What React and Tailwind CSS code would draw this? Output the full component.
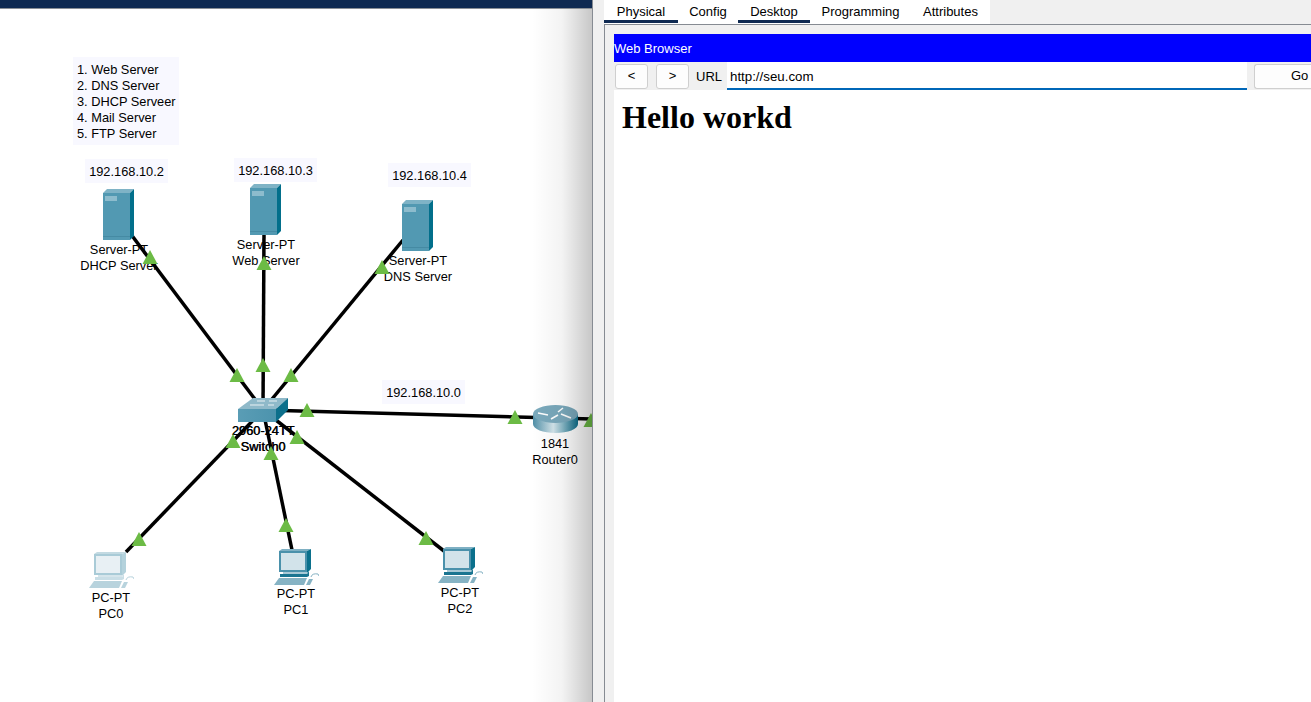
import React from "react";

function Server() {
  return (
    <svg className="block shrink-0 -ml-[2px]" width="31" height="51" viewBox="0 0 31 51">
      <polygon points="0,4 4,0 31,0 27,4" fill="#7fb3c6" />
      <rect x="0" y="4" width="27" height="47" fill="#5299b2" />
      <polygon points="27,4 31,0 31,47 27,51" fill="#026f8b" />
      <rect x="2" y="7" width="12" height="5" fill="#8dbccd" />
      <rect x="0" y="47" width="27" height="1" fill="#458aa3" />
    </svg>
  );
}

function Pc({ faded }) {
  const c = faded
    ? { front: "#a9cbd7", top: "#c3dae2", side: "#b4d2dc", screen: "#e8f0f4", base: "#b8d3dd", dark: "#c9dee6", light: "#d5e5eb" }
    : { front: "#4a91ab", top: "#7fb0c3", side: "#0b708c", screen: "#d2e3ea", base: "#86b3c4", dark: "#1a7591", light: "#a8c9d6" };
  return (
    <svg className="block shrink-0" width="45" height="36" viewBox="0 0 45 36">
      <polygon points="5,2 8,0 37,0 33,2" fill={c.top} />
      <rect x="5" y="2" width="28" height="21" fill={c.front} />
      <polygon points="33,2 37,0 37,20 33,24" fill={c.side} />
      <rect x="7" y="4" width="24" height="17" fill={c.screen} />
      <rect x="9" y="23" width="24" height="2" fill={c.light} />
      <polygon points="6,25 33,25 35,22 35,27 33,28 6,28" fill={c.dark} />
      <polygon points="5,29 33,29 30,36 0,36" fill={c.base} />
      <polygon points="32,36 35,30 39,30 36,36" fill={c.base} />
      <path d="M37 28 q1 -4 7 -3 l1 2" fill="none" stroke={c.base} strokeWidth="1" />
    </svg>
  );
}

function Switch() {
  return (
    <svg className="block shrink-0" width="50" height="24" viewBox="0 0 50 24">
      <defs>
        <linearGradient id="sw" x1="0" y1="0" x2="1" y2="0">
          <stop offset="0" stopColor="#5a9db5" />
          <stop offset="1" stopColor="#4c93ad" />
        </linearGradient>
      </defs>
      <polygon points="0,11 15,0 50,0 38,11" fill="#8fb9c9" />
      <rect x="0" y="11" width="38" height="13" fill="url(#sw)" />
      <polygon points="38,11 50,0 50,12 38,24" fill="#0c6f8b" />
      <path d="M19 3 h8 M31 3 h8 M12 7 h14 M30 7 h6" stroke="#e8f0f3" strokeWidth="1" />
    </svg>
  );
}

function Router() {
  return (
    <svg className="block shrink-0" width="45" height="28" viewBox="0 0 45 28">
      <defs>
        <linearGradient id="rt" x1="0" y1="0" x2="1" y2="0">
          <stop offset="0" stopColor="#4f8ea6" />
          <stop offset="0.45" stopColor="#d5e6ec" />
          <stop offset="1" stopColor="#0f6f8c" />
        </linearGradient>
      </defs>
      <path d="M0 9 V19 C0 24 10 28 22.5 28 C35 28 45 24 45 19 V9 Z" fill="url(#rt)" />
      <ellipse cx="22.5" cy="9" rx="22.5" ry="9" fill="#7aa9bc" />
      <path d="M5 8 L15 10 M18 14 L25 10 M25 7 L30 3 M28 9 L38 13" stroke="#ffffff" strokeWidth="1.6" fill="none" />
    </svg>
  );
}

const tris = [
  [150, 257], [264, 263], [382, 267], [237, 375], [263, 365], [291, 375],
  [307, 410], [515, 417], [591, 420], [297, 437], [271, 453], [233, 441],
  [139, 539], [286, 525], [426, 538],
];

function Links() {
  return (
    <svg className="absolute left-0 top-0" width="592" height="702" viewBox="0 0 592 702">
      <g stroke="#000" strokeWidth="3.5" fill="none">
        <line x1="130" y1="233" x2="263" y2="410" />
        <line x1="264" y1="234" x2="263" y2="410" />
        <line x1="403" y1="240" x2="263" y2="410" />
        <line x1="263" y1="410" x2="592" y2="419" />
        <line x1="126" y1="552" x2="263" y2="410" />
        <line x1="292" y1="550" x2="263" y2="410" />
        <line x1="444" y1="551" x2="263" y2="410" />
      </g>
    </svg>
  );
}

function Triangles() {
  return (
    <svg className="absolute left-0 top-0" width="592" height="702" viewBox="0 0 592 702">
      <g fill="#6cbb45">
        {tris.map(([x, y]) => (
          <polygon key={`${x}-${y}`} points={`${x - 7.5},${y + 7} ${x + 7.5},${y + 7} ${x},${y - 7}`} />
        ))}
      </g>
    </svg>
  );
}

function Node({ className, labelClass, lines, children }) {
  return (
    <div className={`absolute w-[120px] flex flex-col items-center whitespace-nowrap leading-4 ${className}`}>
      {children}
      <div className={`flex flex-col items-center ${labelClass || "mt-0.5"}`}>
        <div>{lines[0]}</div>
        <div>{lines[1]}</div>
      </div>
    </div>
  );
}

function Tab({ label, active, className }) {
  return (
    <div className={`h-6 flex flex-col items-center pt-1 ${className}`}>
      <span className="leading-4">{label}</span>
      {active && <span className="mt-auto mb-px h-1 w-full bg-[#0f2a52]" />}
    </div>
  );
}

const ip = "absolute h-6 w-[83px] flex items-center justify-center pt-0.5 bg-[#f8f8ff]";

export default function App() {
  return (
    <div className="flex h-[702px] w-[1311px] overflow-hidden bg-white text-[13px] text-black font-['Liberation_Sans',Arial,sans-serif]">
      <div className="relative w-[592px] h-full shrink-0 overflow-hidden bg-white text-[12.8px]">
        <div className="h-[9px] bg-[#0f2a52] border-b border-[#8a8f96]" />
        <Links />

        <div className="absolute left-[73px] top-[57px] w-[106px] h-[88px] bg-[#f8f8ff] pl-1 pt-[5px] leading-4 whitespace-nowrap">
          <div>1. Web Server</div>
          <div>2. DNS Server</div>
          <div>3. DHCP Serveer</div>
          <div>4. Mail Server</div>
          <div>5. FTP Server</div>
        </div>

        <div className={`${ip} left-[85px] top-[159px]`}>192.168.10.2</div>
        <div className={`${ip} left-[234px] top-[158px]`}>192.168.10.3</div>
        <div className={`${ip} left-[388px] top-[163px]`}>192.168.10.4</div>
        <div className={`${ip} left-[382px] top-[380px]`}>192.168.10.0</div>

        <Node className="left-[59px] top-[189px]" lines={["Server-PT", "DHCP Server"]}><Server /></Node>
        <Node className="left-[206px] top-[184px]" lines={["Server-PT", "Web Server"]}><Server /></Node>
        <Node className="left-[358px] top-[200px]" lines={["Server-PT", "DNS Server"]}><Server /></Node>
        <Node className="left-[203px] top-[398px] [text-shadow:0.5px_0_0_#000]" labelClass="mt-px" lines={["2960-24TT", "Switch0"]}><Switch /></Node>
        <Node className="left-[495px] top-[405px]" labelClass="mt-[3px]" lines={["1841", "Router0"]}><Router /></Node>
        <Node className="left-[51px] top-[552px]" lines={["PC-PT", "PC0"]}><Pc faded /></Node>
        <Node className="left-[236px] top-[549px]" labelClass="mt-px" lines={["PC-PT", "PC1"]}><Pc /></Node>
        <Node className="left-[400px] top-[547px]" lines={["PC-PT", "PC2"]}><Pc /></Node>

        <Triangles />
        <div className="absolute right-0 top-[9px] bottom-0 w-[60px] bg-gradient-to-r from-transparent via-[#0000000c] to-[#00000038]" />
      </div>

      <div className="flex-1 min-w-0 h-full flex flex-col bg-[#f0f0f0] border-l border-[#868b92] pl-[11px]">
        <div className="flex h-6 w-[386px] shrink-0 bg-white">
          <Tab label="Physical" active className="w-[74px]" />
          <Tab label="Config" className="w-[60px]" />
          <Tab label="Desktop" active className="w-[72px]" />
          <Tab label="Programming" className="w-[101px]" />
          <Tab label="Attributes" className="w-[79px]" />
        </div>
        <div className="flex-1 min-h-0 border-l border-t border-[#868b92] pl-[9px] pt-[9px] flex flex-col">
          <div className="h-7 shrink-0 bg-[#0000ff] text-white flex items-center pt-0.5">Web Browser</div>
          <div className="h-7 shrink-0 flex bg-[#f0f0f0] items-stretch">
            <div className="flex items-center gap-2 pl-px">
              <button className="w-[33px] h-[25px] rounded-[3px] border border-[#cfcfcf] bg-[#fdfdfd] text-[13px]">&lt;</button>
              <button className="w-[33px] h-[25px] rounded-[3px] border border-[#cfcfcf] bg-[#fdfdfd] text-[13px]">&gt;</button>
            </div>
            <div className="w-[37px] ml-px flex items-center pl-1.5 pt-0.5">URL</div>
            <div className="w-[520px] bg-white border-b-2 border-[#0067b8] pl-[3px] flex items-center pt-1 text-[13.3px]">http://seu.com</div>
            <div className="flex-1 min-w-0 pl-[7px] flex items-center">
              <button className="w-[80px] h-[25px] rounded-l-[3px] border border-r-0 border-[#cfcfcf] bg-[#fdfdfd] text-[13px] text-left pl-[36px]">Go</button>
            </div>
          </div>
          <div className="flex-1 bg-white pl-2 pt-[9px]">
            <h1 className="font-['Liberation_Serif','Times_New_Roman',serif] font-bold text-[32px] leading-9">Hello workd</h1>
          </div>
        </div>
      </div>
    </div>
  );
}
